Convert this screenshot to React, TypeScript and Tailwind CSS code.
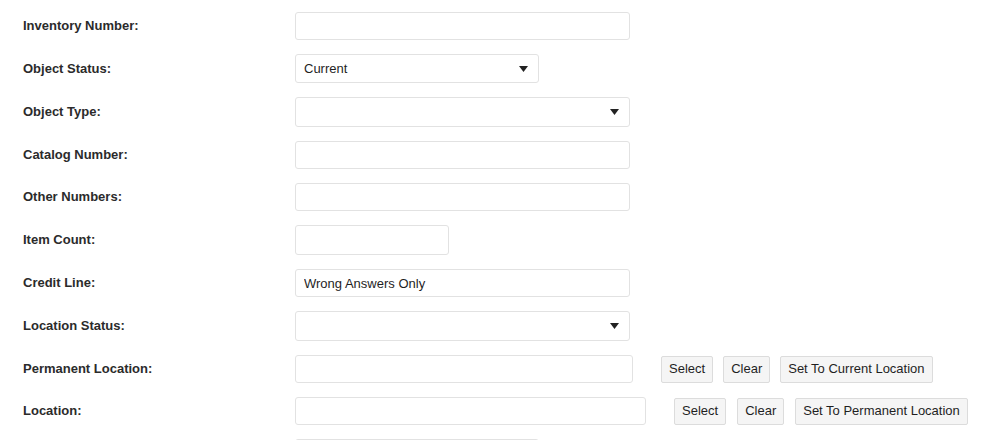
import React from 'react';

const font = { fontFamily: '"Liberation Sans", Arial, Helvetica, sans-serif' };

const Label: React.FC<{ children: React.ReactNode }> = ({ children }) => (
  <label className="w-[272px] shrink-0 text-[13px] font-bold text-[#2b2b2b]">{children}</label>
);

const TextBox: React.FC<{ w: string; h?: string; value?: string }> = ({ w, h = 'h-[28px]', value = '' }) => (
  <input
    readOnly
    value={value}
    className={`${w} ${h} border border-[#e2e2e2] rounded-[3px] bg-white px-2 text-[13px] text-[#1f1f1f] outline-none`}
  />
);

const Select: React.FC<{ w: string; h?: string; value?: string }> = ({ w, h = 'h-[30px]', value = '' }) => (
  <div
    className={`${w} ${h} border border-[#e2e2e2] rounded-[3px] bg-white pl-2 pr-[10px] flex items-center justify-between text-[13px] text-[#1f1f1f]`}
  >
    <span>{value}</span>
    <svg width="9" height="6" viewBox="0 0 9 6">
      <path d="M0 0 L9 0 L4.5 6 Z" fill="#222" />
    </svg>
  </div>
);

const Btn: React.FC<{ children: React.ReactNode }> = ({ children }) => (
  <button className="h-[27px] px-[7px] border border-[#dcdcdc] rounded-[2px] bg-[#f5f5f5] text-[13px] text-[#1f1f1f]">
    {children}
  </button>
);

const Row: React.FC<{ label: string; children: React.ReactNode }> = ({ label, children }) => (
  <div className="flex items-center">
    <Label>{label}</Label>
    {children}
  </div>
);

export default function App() {
  return (
    <div className="w-[1000px] h-[440px] overflow-hidden bg-white pl-[23px] pt-[12px] flex flex-col gap-[14px]" style={font}>
      <Row label="Inventory Number:">
        <TextBox w="w-[335px]" />
      </Row>
      <Row label="Object Status:">
        <Select w="w-[244px]" h="h-[29px]" value="Current" />
      </Row>
      <Row label="Object Type:">
        <Select w="w-[335px]" />
      </Row>
      <Row label="Catalog Number:">
        <TextBox w="w-[335px]" />
      </Row>
      <Row label="Other Numbers:">
        <TextBox w="w-[335px]" />
      </Row>
      <Row label="Item Count:">
        <TextBox w="w-[154px]" h="h-[30px]" />
      </Row>
      <Row label="Credit Line:">
        <TextBox w="w-[335px]" value="Wrong Answers Only" />
      </Row>
      <Row label="Location Status:">
        <Select w="w-[335px]" />
      </Row>
      <Row label="Permanent Location:">
        <TextBox w="w-[338px]" />
        <div className="flex gap-[10px] ml-[28px]">
          <Btn>Select</Btn>
          <Btn>Clear</Btn>
          <Btn>Set To Current Location</Btn>
        </div>
      </Row>
      <Row label="Location:">
        <TextBox w="w-[351px]" />
        <div className="flex gap-[11px] ml-[28px]">
          <Btn>Select</Btn>
          <Btn>Clear</Btn>
          <Btn>Set To Permanent Location</Btn>
        </div>
      </Row>
      <Row label="">
        <Select w="w-[244px]" />
      </Row>
    </div>
  );
}
